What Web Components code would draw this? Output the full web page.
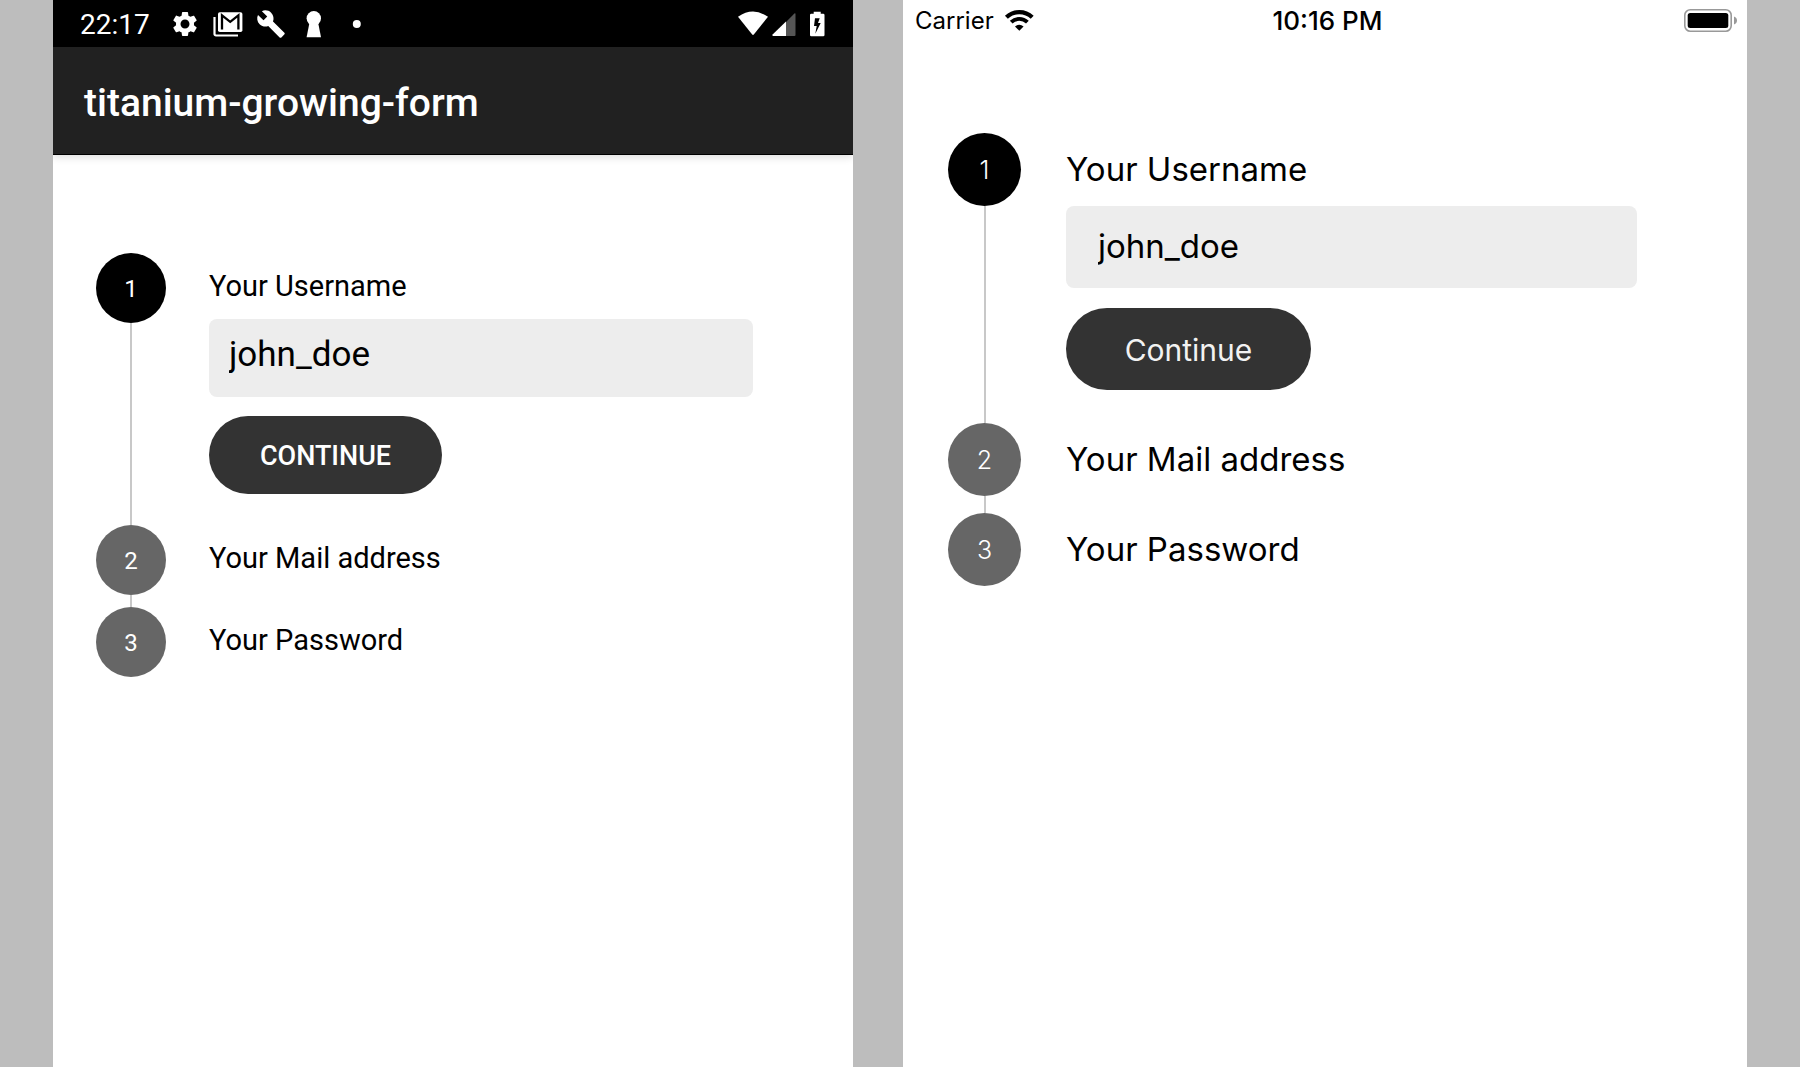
<!DOCTYPE html>
<html lang="en">
<head>
<meta charset="utf-8">
<title>titanium-growing-form</title>
<style>
  body {
    margin: 0;
    min-height: 100vh;
    box-sizing: border-box;
    padding: 0 53px;
    display: grid;
    grid-template-columns: 800fr 844fr;
    gap: 50px;
    background: #bdbdbd;
    color: #000;
  }
  .android { font-family: Roboto, sans-serif; }
  .ios {
    font-family: Inter, sans-serif;
    --form-padding: 92px 110px 40px 45px;
    --bullet: 73px;
    --bullet-size: 25px;
    --bullet-weight: 300;
    --bullet-padding: 0;
    --column-gap: 45px;
    --row-gap: 17px;
    --active-gap: 33px;
    --label-size: 33px;
    --label-height: 71px;
    --field-gap: 2px;
    --control-height: 82px;
    --control-gap: 20px;
    --input-size: 33px;
    --input-padding: 0 32px 2px;
    --button-width: 245px;
    --button-size: 30px;
    --button-weight: 400;
    --button-case: none;
    --button-color: #f2f2f2;
  }
</style>
</head>
<body>
  <phone-screen class="android">
    <android-status-bar slot="status" time="22:17"></android-status-bar>
    <app-toolbar slot="status">titanium-growing-form</app-toolbar>
    <growing-form>
      <form-step number="1" label="Your Username" value="john_doe" active></form-step>
      <form-step number="2" label="Your Mail address"></form-step>
      <form-step number="3" label="Your Password" last></form-step>
    </growing-form>
  </phone-screen>

  <phone-screen class="ios">
    <ios-status-bar slot="status" carrier="Carrier" time="10:16 PM"></ios-status-bar>
    <growing-form>
      <form-step number="1" label="Your Username" value="john_doe" active></form-step>
      <form-step number="2" label="Your Mail address"></form-step>
      <form-step number="3" label="Your Password" last></form-step>
    </growing-form>
  </phone-screen>

<script>
class BaseElement extends HTMLElement {
  connectedCallback() {
    if (this.shadowRoot) return;
    this.attachShadow({ mode: 'open' }).innerHTML = this.render();
  }
}

customElements.define('phone-screen', class extends BaseElement {
  render() {
    return `
      <style>
        :host { display: flex; flex-direction: column; background: #fff; min-width: 0; }
        header { display: flex; flex-direction: column; }
      </style>
      <header><slot name="status"></slot></header>
      <main><slot></slot></main>`;
  }
});

/* Status bar icons share a 30-unit square canvas. */
const ICONS = {
  settings: `<path transform="scale(1.25)" d="M19.14 12.94c.04-.3.06-.61.06-.94 0-.32-.02-.64-.07-.94l2.03-1.58c.18-.14.23-.41.12-.61l-1.92-3.32c-.12-.22-.37-.29-.59-.22l-2.39.96c-.5-.38-1.03-.7-1.62-.94l-.36-2.54c-.04-.24-.24-.41-.48-.41h-3.84c-.24 0-.43.17-.47.41l-.36 2.54c-.59.24-1.13.57-1.62.94l-2.39-.96c-.22-.08-.47 0-.59.22L2.74 8.87c-.12.21-.08.47.12.61l2.03 1.58c-.05.3-.09.63-.09.94s.02.64.07.94l-2.03 1.58c-.18.14-.23.41-.12.61l1.92 3.32c.12.22.37.29.59.22l2.39-.96c.5.38 1.03.7 1.62.94l.36 2.54c.05.24.24.41.48.41h3.84c.24 0 .44-.17.47-.41l.36-2.54c.59-.24 1.13-.56 1.62-.94l2.39.96c.22.08.47 0 .59-.22l1.92-3.32c.12-.22.07-.47-.12-.61l-2.01-1.58zM12 15.6c-1.98 0-3.6-1.62-3.6-3.6s1.62-3.6 3.6-3.6 3.6 1.62 3.6 3.6-1.62 3.6-3.6 3.6z"/>`,
  mail: `<path d="M1.500 8v17a1.500 1.500 0 0 0 1.500 1.500h22" fill="none" stroke="#fff" stroke-width="2.2"/>
    <rect x="5" y="3.300" width="24.400" height="19.800" rx="1.800"/>
    <path d="M9 20.600V6.400l8.200 6.400 8.200-6.400v14.200" fill="none" stroke="#000" stroke-width="2.3"/>`,
  wrench: `<path transform="scale(1.25)" d="M22.7 19l-9.1-9.1c.9-2.3.4-5-1.5-6.9-2-2-5-2.4-7.4-1.3L9 6 6 9 1.6 4.7C.4 7.1.9 10.1 2.9 12.1c1.9 1.9 4.6 2.4 6.9 1.5l9.1 9.1c.4.4 1 .4 1.4 0l2.3-2.3c.5-.4.5-1.1.1-1.4z"/>`,
  keyhole: `<circle cx="14.8" cy="9.3" r="7.2"/><path d="M10.8 12h8L22 28.2H7.6z"/>`,
  dot: `<circle cx="14.8" cy="15" r="4"/>`,
  wifi: `<path d="M0 7.8Q15 -2.6 30 7.8L15.8 25.6q-.8.8-1.6 0z"/>`,
  signal: `<path d="M16 13l8.400-8.600q1.100-.6 1.100.6v21q0 1-1 1H16z" fill="#555"/><path d="M16 12.600V27H3.200q-1.500-.4-.6-1.500z"/>`,
  battery: `<path fill-rule="evenodd" d="M11.700 2.700h7v2h2.500q1.300 0 1.300 1.300v20q0 1.300-1.300 1.300H9.300Q8 27.300 8 26V6q0-1.300 1.300-1.300h2.400zM13 9.300h4.700L16 14h2.700l-5.400 10.700L14.700 17H12z"/>`
};
const icon = name => `<svg viewBox="0 0 30 30" width="30" height="30" fill="#fff" aria-hidden="true">${ICONS[name]}</svg>`;

customElements.define('android-status-bar', class extends BaseElement {
  render() {
    return `
      <style>
        :host { display: flex; justify-content: space-between; align-items: center; height: 47px; padding: 0 21px 0 27px; background: #000; color: #fff; }
        div { display: flex; align-items: center; gap: 13px; }
        .signals { gap: 2px; }
        time { min-width: 71px; margin-right: 6px; padding-top: 2px; font-size: 28px; font-weight: 400; line-height: 32px; }
        svg { display: block; overflow: visible; }
      </style>
      <div><time>${this.getAttribute('time')}</time>${['settings', 'mail', 'wrench', 'keyhole', 'dot'].map(icon).join('')}</div>
      <div class="signals">${['wifi', 'signal', 'battery'].map(icon).join('')}</div>`;
  }
});

customElements.define('app-toolbar', class extends BaseElement {
  render() {
    return `
      <style>
        :host { display: flex; align-items: center; box-sizing: border-box; height: 108px; padding: 4px 31px 0; background: #212121; color: #fff; border-bottom: 1px solid #000; box-shadow: 0 2px 8px rgba(0, 0, 0, .14); clip-path: inset(0 0 -12px 0); }
        h1 { margin: 0; font-size: 39px; font-weight: 500; line-height: 46px; }
      </style>
      <h1><slot></slot></h1>`;
  }
});

customElements.define('ios-status-bar', class extends BaseElement {
  render() {
    return `
      <style>
        :host { display: grid; grid-template-columns: 1fr auto 1fr; align-items: center; height: 41px; padding: 0 10px 0 12px; font-size: 24px; line-height: 30px; }
        .carrier { display: flex; align-items: center; gap: 11px; }
        time { padding: 1px 0 0 3px; font-size: 26px; font-weight: 500; }
        .carrier span { padding-top: 1px; }
        svg { display: block; overflow: visible; }
        .battery { justify-self: end; }
      </style>
      <div class="carrier"><span>${this.getAttribute('carrier')}</span>
        <svg width="29" height="21" viewBox="0 0 29 21" aria-hidden="true">
          <path d="M1.400 7.300a18.500 18.500 0 0 1 25.800 0" fill="none" stroke="#000" stroke-width="4.200"/>
          <path d="M6.200 12.200a11.600 11.600 0 0 1 16.200 0" fill="none" stroke="#000" stroke-width="3.900"/>
          <path d="M10 16.500q4.300-3.400 8.600 0l-4.300 4.200z"/>
        </svg>
      </div>
      <time>${this.getAttribute('time')}</time>
      <svg class="battery" width="53" height="23" viewBox="0 0 53 23" aria-hidden="true">
        <rect x=".8" y=".8" width="46.400" height="21.400" rx="5.500" fill="none" stroke="#999" stroke-width="1.600"/>
        <rect x="3.700" y="4" width="40.600" height="15" rx="2.500"/>
        <path d="M50 7.500q3 1.200 3 4t-3 4z" fill="#999"/>
      </svg>`;
  }
});

customElements.define('growing-form', class extends BaseElement {
  render() {
    return `
      <style>
        :host { display: block; padding: var(--form-padding, 98px 100px 40px 43px); }
        form { display: flex; flex-direction: column; }
      </style>
      <form onsubmit="return false"><slot></slot></form>`;
  }
});

customElements.define('form-step', class extends BaseElement {
  render() {
    const active = this.hasAttribute('active');
    const label = this.getAttribute('label');
    return `
      <style>
        :host { display: grid; grid-template-columns: var(--bullet, 70px) 1fr; column-gap: var(--column-gap, 43px); }
        .rail { display: flex; flex-direction: column; align-items: center; }
        .bullet { display: flex; align-items: center; justify-content: center; box-sizing: border-box; width: var(--bullet, 70px); height: var(--bullet, 70px); padding: var(--bullet-padding, 2px 0 0); border-radius: 50%; background: #666; color: #fff; font-size: var(--bullet-size, 24px); line-height: 30px; font-weight: var(--bullet-weight, 400); }
        :host([active]) .bullet { background: #000; }
        .line { flex: 1; width: 2px; background: #c8c8c8; }
        :host([last]) .line { display: none; }
        .body { padding-bottom: var(--row-gap, 12px); }
        :host([active]) .body { padding-bottom: var(--active-gap, 31px); }
        .label { display: flex; align-items: center; height: var(--label-height, 66px); font-size: var(--label-size, 29px); line-height: 40px; }
        :host(:not([active])) .body { min-height: var(--bullet, 70px); }
        input { display: block; box-sizing: border-box; width: 100%; height: var(--control-height, 78px); margin: var(--field-gap, 0) 0 0; padding: var(--input-padding, 0 20px 8px); border: 0; border-radius: 8px; outline: 0; background: #ededed; color: #000; font-family: inherit; font-size: var(--input-size, 35px); }
        button { display: block; width: var(--button-width, 233px); height: var(--control-height, 78px); margin: var(--control-gap, 19px) 0 0; padding: 1px 0 0; border: 0; border-radius: 41px; background: #333; color: var(--button-color, #fff); font-family: inherit; font-size: var(--button-size, 27px); font-weight: var(--button-weight, 500); text-transform: var(--button-case, uppercase); }
      </style>
      <div class="rail"><span class="bullet">${this.getAttribute('number')}</span><span class="line"></span></div>
      <div class="body">
        ${active
          ? `<label class="label" for="field">${label}</label>
             <input id="field" type="text" value="${this.getAttribute('value') || ''}">
             <button type="button">Continue</button>`
          : `<div class="label">${label}</div>`}
      </div>`;
  }
});
</script>
</body>
</html>
